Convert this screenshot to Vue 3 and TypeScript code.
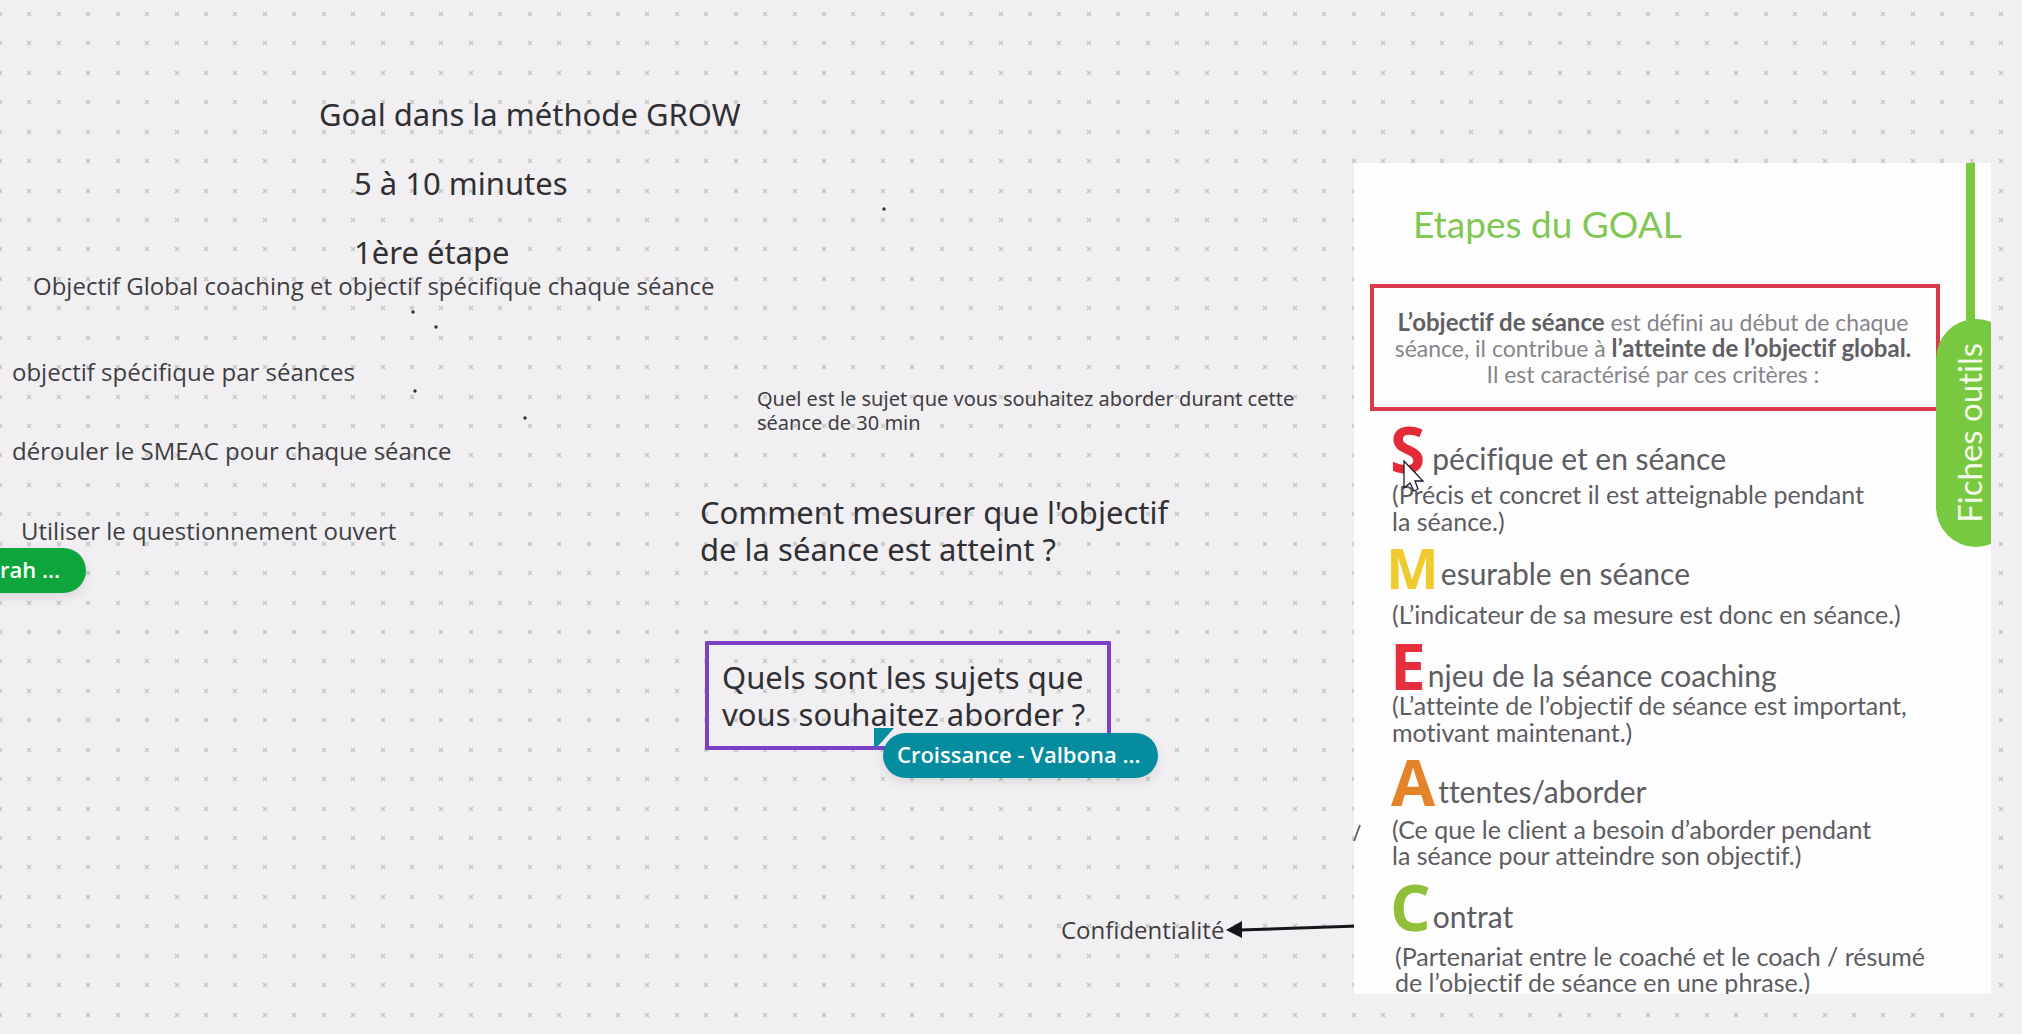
<script setup lang="ts">
interface Note {
  id: string
  x: number
  y: number
  size: 'large' | 'medium' | 'small'
  lines: string[]
}

interface Step {
  id: string
  initial: string
  rest: string
  lines: string[]
}

const notes: Note[] = [
  { id: 'goal', x: 319, y: 96, size: 'large', lines: ['Goal dans la méthode GROW'] },
  { id: 'time', x: 354, y: 165, size: 'large', lines: ['5 à 10 minutes'] },
  { id: 'first', x: 354, y: 234, size: 'large', lines: ['1ère étape'] },
  { id: 'global', x: 33, y: 270, size: 'medium', lines: ['Objectif Global coaching et objectif spécifique chaque séance'] },
  { id: 'specific', x: 12, y: 356, size: 'medium', lines: ['objectif spécifique par séances'] },
  { id: 'smeac', x: 12, y: 435, size: 'medium', lines: ['dérouler le SMEAC pour chaque séance'] },
  { id: 'open', x: 21, y: 515, size: 'medium', lines: ['Utiliser le questionnement ouvert'] },
  { id: 'subject', x: 757, y: 387, size: 'small', lines: ['Quel est le sujet que vous souhaitez aborder durant cette', 'séance de 30 min'] },
  { id: 'measure', x: 700, y: 494, size: 'large', lines: ["Comment mesurer que l'objectif", 'de la séance est atteint ?'] },
  { id: 'confidential', x: 1061, y: 914, size: 'medium', lines: ['Confidentialité'] },
]

const steps: Step[] = [
  { id: 's', initial: 'S', rest: 'pécifique et en séance', lines: ['(Précis et concret il est atteignable pendant', 'la séance.)'] },
  { id: 'm', initial: 'M', rest: 'esurable en séance', lines: ['(L’indicateur de sa mesure est donc en séance.)'] },
  { id: 'e', initial: 'E', rest: 'njeu de la séance coaching', lines: ['(L’atteinte de l’objectif de séance est important,', 'motivant maintenant.)'] },
  { id: 'a', initial: 'A', rest: 'ttentes/aborder', lines: ['(Ce que le client a besoin d’aborder pendant', 'la séance pour atteindre son objectif.)'] },
  { id: 'c', initial: 'C', rest: 'ontrat', lines: ['(Partenariat entre le coaché et le coach / résumé', 'de l’objectif de séance en une phrase.)'] },
]

// Seven grid marks share one 206px tile
const marks = [0, 29, 59, 88, 118, 147, 177]

const specks = [
  { x: 413, y: 312 },
  { x: 436, y: 327 },
  { x: 415, y: 391 },
  { x: 525, y: 418 },
  { x: 884, y: 209 },
]
</script>

<template>
  <main class="board">
    <svg class="grid" aria-hidden="true">
      <defs>
        <pattern id="marks" x="-10" y="4" width="206" height="206" patternUnits="userSpaceOnUse">
          <template v-for="my in marks" :key="my">
            <path
              v-for="mx in marks"
              :key="mx"
              :transform="`translate(${mx + 8} ${my + 8})`"
              d="M0 0l4 4M4 0l-4 4"
              stroke="#c3c5c5"
              stroke-width="1.3"
            />
          </template>
        </pattern>
      </defs>
      <rect width="100%" height="100%" fill="url(#marks)" />
      <circle v-for="s in specks" :key="s.x" :cx="s.x" :cy="s.y" r="1.7" fill="#333" />
    </svg>

    <p
      v-for="n in notes"
      :key="n.id"
      class="note"
      :class="n.size"
      :style="{ left: n.x + 'px', top: n.y + 'px' }"
    >
      <span v-for="l in n.lines" :key="l" class="line">{{ l }}</span>
    </p>

    <p class="note large selected">
      <span class="line">Quels sont les sujets que</span>
      <span class="line">vous souhaitez aborder ?</span>
    </p>

    <svg class="arrow" width="136" height="24" viewBox="0 0 136 24" aria-hidden="true">
      <path d="M14 12L132 8" stroke="#15151a" stroke-width="3" />
      <path d="M0 12L16 3V20Z" fill="#15151a" />
    </svg>

    <article class="card">
      <h1 class="title">Etapes du GOAL</h1>
      <p class="intro">
        <span class="line"><strong>L’objectif de séance</strong> est défini au début de chaque</span>
        <span class="line">séance, il contribue à <strong>l’atteinte de l’objectif global.</strong></span>
        <span class="line">Il est caractérisé par ces critères :</span>
      </p>
      <section v-for="s in steps" :key="s.id" class="step" :class="`step-${s.id}`">
        <h2 class="heading"><span class="initial">{{ s.initial }}</span><span class="rest">{{ s.rest }}</span></h2>
        <p class="desc"><span v-for="l in s.lines" :key="l" class="line">{{ l }}</span></p>
      </section>
      <div class="stem"></div>
      <div class="tab"><span class="tab-text">Fiches outils</span></div>
    </article>

    <svg class="slash" width="12" height="22" viewBox="0 0 12 22" aria-hidden="true">
      <path d="M2 19L8 3" stroke="#66666a" stroke-width="2" />
    </svg>

    <svg class="corner" width="20" height="20" viewBox="0 0 20 20" aria-hidden="true">
      <path d="M0 0H20L5 17L0 20Z" fill="#058c9f" />
    </svg>
    <div class="user user-teal">Croissance - Valbona ...</div>
    <div class="user user-green">Deborah ...</div>

    <svg class="pointer" width="24" height="36" viewBox="0 0 24 36" aria-hidden="true">
      <path
        d="M1 1V28L7 23L11 31L15 29L12 21H20Z"
        fill="#fff"
        stroke="#1b1b2a"
        stroke-width="1.3"
      />
    </svg>
  </main>
</template>

<style>
body {
  margin: 0;
}
</style>

<style scoped>
.board {
  position: relative;
  min-height: 100vh;
  overflow: hidden;
  background: #f1eff2;
  color: #303034;
  font-family: "Noto Sans", sans-serif;
}

.grid {
  position: absolute;
  inset: 0;
  width: 100%;
  height: 100%;
}

.line {
  display: block;
  white-space: nowrap;
}

.note {
  position: absolute;
  margin: 0;
}

.large {
  font-size: 31px;
  line-height: 37px;
}

.medium {
  font-family: "Open Sans", sans-serif;
  font-size: 24px;
  line-height: 32px;
  color: #3e3e42;
}

.small {
  font-size: 20px;
  line-height: 24px;
  color: #3e3e42;
}

.selected {
  box-sizing: border-box;
  left: 705px;
  top: 641px;
  width: 406px;
  height: 109px;
  padding: 14px 13px;
  border: 4px solid #7b42c9;
}

.arrow {
  position: absolute;
  left: 1226px;
  top: 918px;
}

.slash {
  position: absolute;
  left: 1352px;
  top: 822px;
}

.card {
  position: absolute;
  left: 1354px;
  top: 163px;
  box-sizing: border-box;
  width: 637px;
  height: 831px;
  padding: 39px 0 0 38px;
  overflow: hidden;
  background: #fefdfe;
  color: #5c5c61;
  font-family: Lato, sans-serif;
  font-variant-ligatures: none;
}

.title {
  margin: 0 0 38px 21px;
  color: #80c753;
  font-size: 37px;
  font-weight: 400;
  line-height: 44px;
}

.intro {
  box-sizing: border-box;
  width: 566px;
  width: 570px;
  height: 127px;
  margin: 0 0 14px -22px;
  padding: 21px 4px 21px 0;
  border: 4px solid #d93a48;
  color: #858589;
  font-size: 23px;
  line-height: 26px;
  text-align: center;
}

.intro strong {
  color: #606064;
  font-size: 24px;
}

.heading {
  display: flex;
  align-items: flex-end;
  height: 48px;
  margin: 0;
  font-weight: 400;
}

.initial {
  margin-left: -2px;
  font-family: "Open Sans", sans-serif;
  font-size: 64px;
  font-weight: 700;
  line-height: 48px;
}

.rest {
  font-size: 30px;
  line-height: 30px;
}

.desc {
  margin: 0;
  font-size: 25px;
  line-height: 27px;
}

.step-s .initial { margin-right: 7px; color: #e42a36; }
.step-m .initial { margin: 0 2px 0 -6px; color: #f0cb2f; font-size: 56px; line-height: 42px; }
.step-e .initial { margin-right: 2px; color: #e62f3d; }
.step-a .initial { margin-left: -1px; margin-right: 3px; color: #e5832b; }
.step-c .initial { margin-right: 2px; color: #90bf3a; }

.step-s .desc { margin: 8px 0 5px; }
.step-m .desc { margin: 13px 0 14px; }
.step-e .desc { margin: 2px 0 12px; }
.step-a .desc { margin: 10px 0 15px; line-height: 26px; }
.step-c .desc { margin: 12px 0 0 3px; line-height: 26px; }

.stem {
  position: absolute;
  left: 612px;
  top: 0;
  width: 9px;
  height: 170px;
  background: #79c940;
}

.tab {
  position: absolute;
  left: 582px;
  top: 156px;
  display: flex;
  align-items: center;
  width: 80px;
  height: 228px;
  border-radius: 40px;
  background: #79c940;
  color: #f4fbe9;
}

.tab-text {
  margin-left: 15px;
  font-size: 33px;
  line-height: 36px;
  writing-mode: vertical-rl;
  transform: rotate(180deg);
  white-space: nowrap;
}

.corner {
  position: absolute;
  left: 874px;
  top: 728px;
}

.user {
  position: absolute;
  box-sizing: border-box;
  height: 45px;
  border-radius: 23px;
  box-shadow: 0 4px 12px rgb(0 0 0 / 10%);
  color: #fff;
  font-family: "Open Sans", sans-serif;
  font-size: 22px;
  font-weight: 600;
  line-height: 43px;
  white-space: nowrap;
}

.user-teal {
  left: 883px;
  top: 733px;
  width: 275px;
  padding-left: 14px;
  background: #058c9f;
}

.user-green {
  left: -100px;
  top: 548px;
  width: 186px;
  padding-right: 26px;
  background: #0ea53c;
  text-align: right;
}

.pointer {
  position: absolute;
  left: 1403px;
  top: 460px;
}
</style>
